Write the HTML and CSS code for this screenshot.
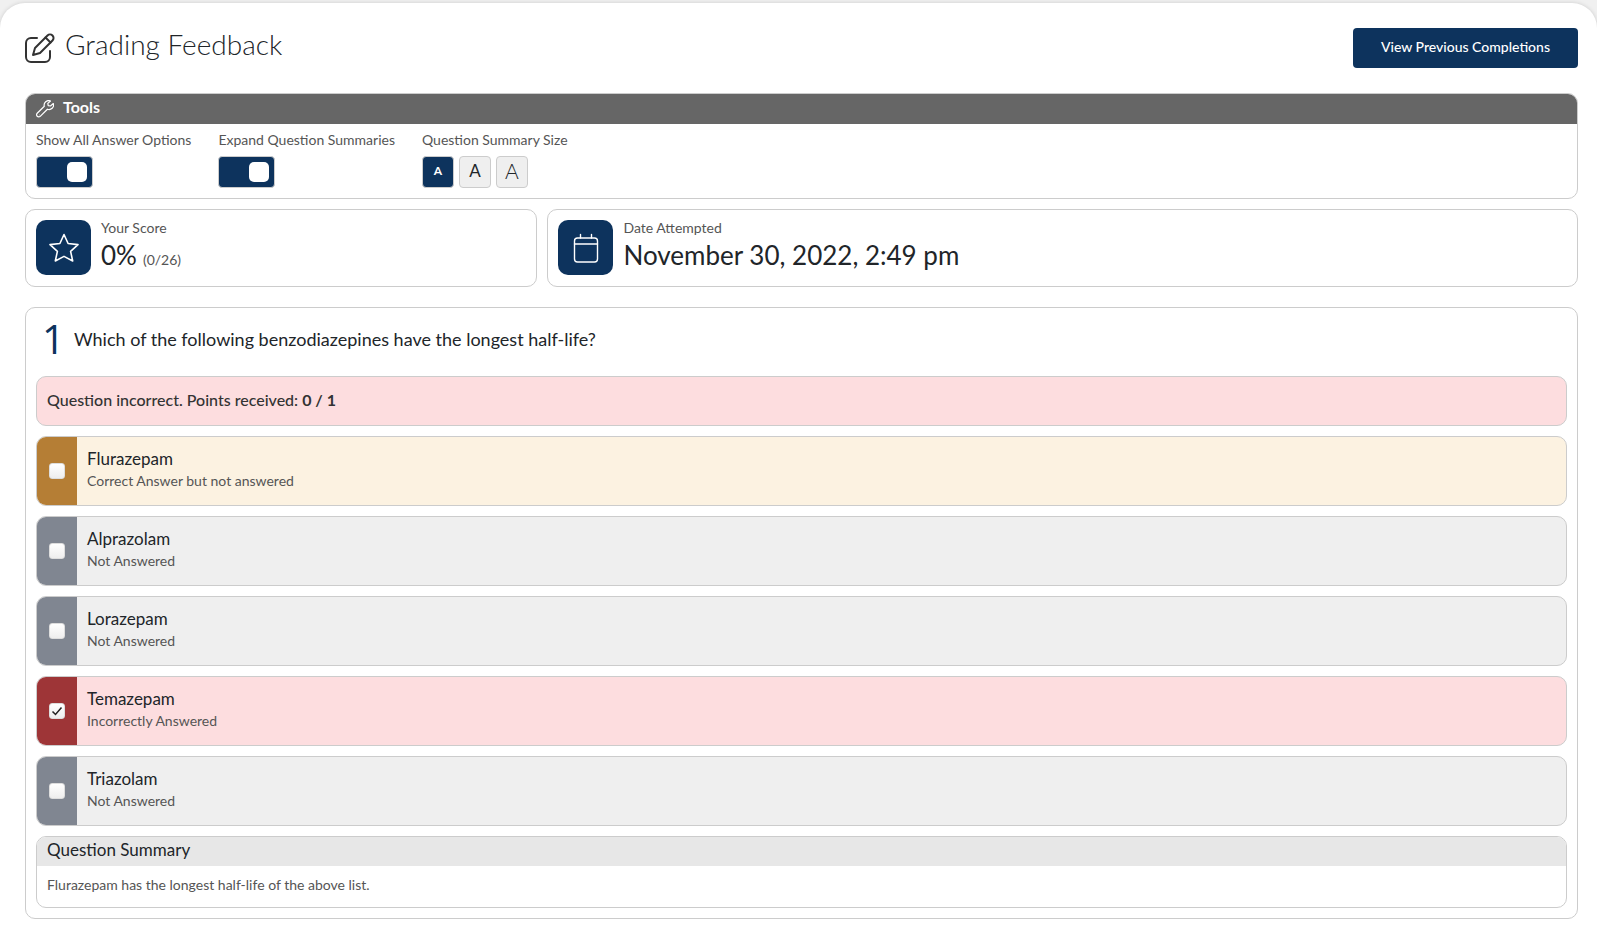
FILE: index.html
```html
<!DOCTYPE html>
<html lang="en">
<head>
    <meta charset="UTF-8">
    <meta name="viewport" content="width=device-width, initial-scale=1.0">
    <title>Grading Feedback</title>
    <link rel="stylesheet" href="styles.css">
</head>
<body>
    <main class="page">
        <header class="page-header">
            <svg class="title-icon" viewBox="0 0 30 30" fill="none" stroke="currentColor" stroke-width="2" stroke-linecap="round" stroke-linejoin="round">
                <path d="M12 5H6a5 5 0 0 0-5 5v14a5 5 0 0 0 5 5h14a5 5 0 0 0 5-5v-6"/>
                <path d="M8 22l2-7L22.500 2.500a3.500 3.500 0 0 1 5 5L15 20z"/>
                <path d="M20.500 4.500l5 5"/>
            </svg>
            <h1>Grading Feedback</h1>
            <button type="button" class="btn-primary">View Previous Completions</button>
        </header>

        <section class="panel tools">
            <h2 class="tools-header">
                <svg class="tools-icon" viewBox="0 0 18 18" fill="none" stroke="currentColor" stroke-width="1.200" stroke-linejoin="round">
                    <path d="M14.500 1a4.500 4.500 0 0 0-6.200 5.300L1.200 13.300a2.100 2.100 0 0 0 0 3 2.100 2.100 0 0 0 3 0l7.200-7.100A4.500 4.500 0 0 0 17.300 3.500L14.500 6l-2.300-.4-.4-2.200z"/>
                    <path d="M3 14.800h.4"/>
                </svg>
                Tools
            </h2>
            <div class="tools-body">
                <div class="tool">
                    <label for="showAll">Show All Answer Options</label>
                    <input type="checkbox" class="switch" id="showAll" checked>
                </div>
                <div class="tool">
                    <label for="expandAll">Expand Question Summaries</label>
                    <input type="checkbox" class="switch" id="expandAll" checked>
                </div>
                <div class="tool" role="group" aria-labelledby="sizeLabel">
                    <span id="sizeLabel">Question Summary Size</span>
                    <div class="sizes">
                        <button type="button" class="size size-sm active">A</button>
                        <button type="button" class="size size-md">A</button>
                        <button type="button" class="size size-lg">A</button>
                    </div>
                </div>
            </div>
        </section>

        <section class="stats">
            <div class="panel stat">
                <div class="stat-icon">
                    <svg viewBox="0 0 30 30" fill="none" stroke="currentColor" stroke-width="1.600" stroke-linejoin="round">
                        <path d="M15 1.500l4.100 9 9.900 1.100-7.400 6.700 2.100 9.700L15 23.400 6.300 28l2.100-9.700L1 11.600l9.900-1.100z"/>
                    </svg>
                </div>
                <div>
                    <div class="stat-label">Your Score</div>
                    <div class="stat-value"><span>0%</span><small>(0/26)</small></div>
                </div>
            </div>
            <div class="panel stat">
                <div class="stat-icon">
                    <svg viewBox="0 0 30 30" fill="none" stroke="currentColor" stroke-width="1.400" stroke-linecap="round">
                        <rect x="3.500" y="5" width="23" height="24" rx="3"/>
                        <path d="M3.500 11h23M9.500 1.500V5M20.500 1.500V5"/>
                    </svg>
                </div>
                <div>
                    <div class="stat-label">Date Attempted</div>
                    <div class="stat-value">November 30, 2022, 2:49 pm</div>
                </div>
            </div>
        </section>

        <section class="panel question">
            <h2 class="question-title"><span class="number">1</span>Which of the following benzodiazepines have the longest half-life?</h2>
            <p class="result">Question incorrect. Points received: <b>0 / 1</b></p>

            <div class="answer missed">
                <div class="mark"><input type="checkbox" id="answer1"></div>
                <label for="answer1">Flurazepam <small>Correct Answer but not answered</small></label>
            </div>
            <div class="answer">
                <div class="mark"><input type="checkbox" id="answer2"></div>
                <label for="answer2">Alprazolam <small>Not Answered</small></label>
            </div>
            <div class="answer">
                <div class="mark"><input type="checkbox" id="answer3"></div>
                <label for="answer3">Lorazepam <small>Not Answered</small></label>
            </div>
            <div class="answer incorrect">
                <div class="mark"><input type="checkbox" id="answer4" checked></div>
                <label for="answer4">Temazepam <small>Incorrectly Answered</small></label>
            </div>
            <div class="answer">
                <div class="mark"><input type="checkbox" id="answer5"></div>
                <label for="answer5">Triazolam <small>Not Answered</small></label>
            </div>

            <div class="panel summary">
                <h3>Question Summary</h3>
                <p>Flurazepam has the longest half-life of the above list.</p>
            </div>
        </section>
    </main>
</body>
</html>
```
FILE: styles.css
```css
* { box-sizing: border-box; }
body { margin: 0; padding-top: 3px; background: #f0f0f0; color: #212529; font-family: Lato, "Open Sans", sans-serif; font-size: 17px; }
h1, h2, h3, p { margin: 0; font-weight: 400; }
button { font-family: inherit; cursor: pointer; }
small { font-size: 14px; color: #555; }

.page { min-height: calc(100vh - 3px); padding: 25px 19px 6px 25px; background: #fff; border-radius: 25px 25px 0 0; box-shadow: 0 0 4px rgba(0,0,0,0.15); }
.panel { border: 1px solid #ccc; border-radius: 10px; background: #fff; overflow: hidden; }

/* Header */
.page-header { display: flex; align-items: flex-start; gap: 10px; height: 65px; }
.title-icon { width: 30px; height: 30px; margin-top: 5px; color: #333; }
h1 { flex: 1; font-size: 28px; line-height: 32px; font-weight: 300; }
.btn-primary { height: 40px; padding: 0 28px 3px; border: 0; border-radius: 4px; background: #0d335d; color: #fff; font-size: 14px; font-weight: 500; }

/* Tools */
.tools-header { display: flex; align-items: center; gap: 9px; height: 30px; padding: 0 10px 5px; background: #666; color: #fff; font-size: 16px; font-weight: 700; }
.tools-icon { width: 18px; height: 18px; margin-top: 5px; }
.tools-body { display: flex; gap: 27px; padding: 6px 10px 10px; }
.tool { display: flex; flex-direction: column; align-items: flex-start; gap: 6px; color: #555; font-size: 14px; line-height: 20px; }
.switch { appearance: none; display: flex; align-items: center; justify-content: flex-end; width: 57px; height: 32px; margin: 0; padding: 5px; border: 1px solid #ccc; border-radius: 4px; background: #0d335d; }
.switch::before { content: ""; width: 20px; height: 20px; border-radius: 5px; background: #fff; }
.switch:not(:checked) { justify-content: flex-start; background: #808691; }
.sizes { display: flex; gap: 5px; }
.size { width: 32px; height: 32px; padding: 0 0 3px; border: 1px solid #ccc; border-radius: 4px; background: #efefef; color: #212529; }
.size-sm { font-size: 12px; }
.size-md { font-size: 17px; }
.size-lg { font-size: 21px; font-weight: 300; }
.size.active { background: #0d335d; color: #fff; font-weight: 700; }

/* Score and date */
.stats { display: grid; grid-template-columns: 33% 1fr; gap: 10px; margin: 10px 0 20px; }
.stat { display: flex; gap: 10px; height: 78px; padding: 10px; }
.stat-icon { display: flex; align-items: center; justify-content: center; width: 55px; height: 55px; border-radius: 10px; background: #0d335d; color: #fff; }
.stat-icon svg { width: 30px; height: 30px; }
.stat-label { color: #555; font-size: 14px; line-height: 16px; }
.stat-value { display: flex; align-items: baseline; gap: 6px; font-size: 26px; line-height: 38px; }

/* Question */
.question { padding: 10px; }
.question-title { display: flex; align-items: center; height: 58px; font-size: 18px; padding-bottom: 16px; padding-left: 6px; }
.number { width: 32px; color: #0d335d; font-family: "Open Sans", sans-serif; font-size: 40px; line-height: 40px; }
.result { height: 50px; padding: 0 10px; border: 1px solid #ccc; border-radius: 10px; background: #fddddf; color: #333; font-size: 16px; font-weight: 500; line-height: 45px; }
.answer { display: flex; height: 70px; margin-top: 10px; border: 1px solid #ccc; border-radius: 10px; background: #efefef; overflow: hidden; }
.mark { display: flex; align-items: center; justify-content: center; width: 40px; background: #808691; }
.mark input { appearance: none; width: 16px; height: 16px; margin: 0; border: 1px solid #ddd; border-radius: 3px; background: linear-gradient(#fff, #eee); }
.mark input:checked { background: url("data:image/svg+xml,%3Csvg xmlns='http://www.w3.org/2000/svg' viewBox='0 0 14 14'%3E%3Cpath d='M2.500 7.500l3 3 6-7' fill='none' stroke='%23222' stroke-width='1.500'/%3E%3C/svg%3E"), linear-gradient(#fff, #eee); }
.answer label { flex: 1; padding: 11px 10px; line-height: 22px; }
.answer small { display: block; }
.missed { background: #fcf2e1; }
.missed .mark { background: #b57e35; }
.incorrect { background: #fddddf; }
.incorrect .mark { background: #9e3537; }

.summary { margin-top: 10px; }
.summary h3 { height: 29px; padding: 0 10px; background: #e7e7e7; font-size: 17px; line-height: 25px; }
.summary p { padding: 8px 10px 11px; color: #555; font-size: 14px; line-height: 22px; }
```
